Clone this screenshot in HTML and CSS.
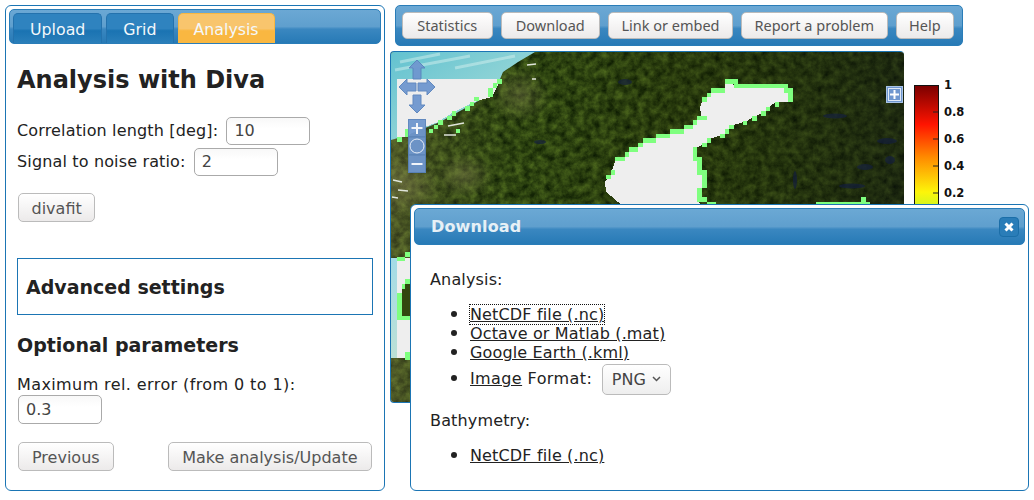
FILE: index.html
```html
<!DOCTYPE html>
<html lang="en">
<head>
    <meta charset="UTF-8">
    <title>Analysis with Diva</title>
    <link rel="stylesheet" href="styles.css">
</head>
<body>
    <!-- left panel -->
    <div class="panel">
        <div class="tabs gloss">
            <a class="tab">Upload</a>
            <a class="tab">Grid</a>
            <a class="tab tab-active">Analysis</a>
        </div>
        <div class="panel-body">
            <h1>Analysis with Diva</h1>
            <div class="field">Correlation length [deg]: <input type="text" value="10"></div>
            <div class="field">Signal to noise ratio: <input type="text" value="2"></div>
            <button class="btn btn-diva">divafit</button>
            <div class="advanced"><h3>Advanced settings</h3></div>
            <h3 class="optional">Optional parameters</h3>
            <div class="max-label">Maximum rel. error (from 0 to 1):</div>
            <input type="text" value="0.3">
            <div class="actions">
                <button class="btn">Previous</button>
                <button class="btn btn-make">Make analysis/Update</button>
            </div>
        </div>
    </div>

    <!-- right side -->
    <div class="main">
        <div class="toolbar gloss">
            <button class="btn btn-wide">Statistics</button>
            <button class="btn btn-wide">Download</button>
            <button class="btn">Link or embed</button>
            <button class="btn">Report a problem</button>
            <button class="btn">Help</button>
        </div>
        <div class="map-row">
            <div class="map">
                <svg class="map-svg" width="513" height="351" viewBox="391 52 513 351">
                    <defs>
                        <filter id="land" x="0" y="0" width="100%" height="100%" color-interpolation-filters="sRGB">
                            <feTurbulence type="fractalNoise" baseFrequency="0.13" numOctaves="5" seed="8"/>
                            <feColorMatrix values="0.42 0 0 0 -0.04  0.5 0 0 0 0  0.18 0 0 0 -0.03  0 0 0 0 1"/>
                        </filter>
                        <linearGradient id="shade" x1="0" y1="0" x2="1" y2="0">
                            <stop offset="0" stop-color="#8a8250" stop-opacity=".35"/>
                            <stop offset=".25" stop-color="#3a5a16" stop-opacity=".15"/>
                            <stop offset=".55" stop-color="#232f08" stop-opacity=".3"/>
                            <stop offset="1" stop-color="#141a10" stop-opacity=".6"/>
                        </linearGradient>
                        <radialGradient id="ridge">
                            <stop offset="0" stop-color="#a89c6c" stop-opacity=".3"/>
                            <stop offset="1" stop-color="#a89c6c" stop-opacity="0"/>
                        </radialGradient>
                        <linearGradient id="water" x1="0" y1="0" x2="1" y2="1">
                            <stop offset="0" stop-color="#63c2d0"/>
                            <stop offset="1" stop-color="#b4e2db"/>
                        </linearGradient>
                        <linearGradient id="strip" x1="0" y1="0" x2="0" y2="1">
                            <stop offset="0" stop-color="#a4dbe6"/>
                            <stop offset="1" stop-color="#bce0d6"/>
                        </linearGradient>
                    </defs>

                    <rect x="391" y="52" width="513" height="351" filter="url(#land)"/>
                    <rect x="391" y="52" width="513" height="351" fill="url(#shade)"/>
                    <ellipse cx="405" cy="185" rx="35" ry="30" fill="url(#ridge)"/>
                    <ellipse cx="520" cy="95" rx="30" ry="28" fill="url(#ridge)"/>
                    <ellipse cx="465" cy="175" rx="28" ry="22" fill="url(#ridge)"/>

                    <!-- lakes -->
                    <g fill="#141f3c" opacity=".7">
                        <ellipse cx="835" cy="116" rx="12" ry="2.500"/>
                        <ellipse cx="887" cy="141" rx="10" ry="3"/>
                        <ellipse cx="795" cy="180" rx="2" ry="9"/>
                        <ellipse cx="865" cy="167" rx="8" ry="3"/>
                        <ellipse cx="852" cy="186" rx="13" ry="2.500"/>
                        <ellipse cx="890" cy="160" rx="5" ry="4"/>
                        <ellipse cx="540" cy="142" rx="6" ry="2"/>
                        <ellipse cx="625" cy="82" rx="7" ry="3"/>
                    </g>

                    <!-- sea at the top left -->
                    <polygon points="391,52 535,52 518,62 503,72 498,84 480,100 440,122 405,136 391,140" fill="url(#water)"/>
                    <path d="M395 70 L470 56 M400 62 L440 54 M455 68 L515 56" stroke="#d3f0ee" stroke-width="3" opacity=".5" fill="none"/>
                    <rect x="391" y="258" width="6" height="100" fill="url(#strip)"/>

                    <!-- coast specks -->
                    <path d="M527 65 l9 -1 M532 79 l4 0 M448 126 l16 -3 M444 135 l12 0 M393 180 l9 2 M398 190 l10 1 M392 197 l6 1" stroke="#dfe4da" stroke-width="1.500" fill="none"/>

                    <!-- grid cells of the analysis -->
                    <g shape-rendering="crispEdges">
                        <polygon fill="#eeeeee" points="397,79 500,79 497,87 492,97 480,100 466,106 452,113 438,122 425,127 412,133 407,137 397,138"/>
                        <path fill="#7fff7f" d="M497 79h5v5h-5z M493 83h4v5h-4z M488 88h5v9h-5z M474 97h5v4h-5z M470 102h4v4h-4z M465 106h5v5h-5z M452 111h4v5h-4z M447 116h5v4h-5z M438 120h5v5h-5z M434 125h4v4h-4z M429 129h4v4h-4z M456 129h4v4h-4z M397 137h5v5h-5z M405 129h3v8h-3z"/>

                        <g transform="translate(590 75) scale(.3333)">
                            <polygon fill="#eeeeee" points="45,320 62,300 75,258 105,245 117,232 143,217 160,203 198,190 240,177 282,163 310,150 322,135 335,125 330,100 335,81 350,67 363,53 405,40 405,27 595,40 595,82 555,82 540,95 528,108 500,122 472,137 432,150 418,163 405,177 363,190 350,203 322,217 322,258 336,300 336,340 322,380 350,400 110,400 80,378 48,350"/>
                            <path fill="#7fff7f" d="M48 300h14v12h-14z M62 285h13v15h-13z M75 245h30v13h-30z M105 232h12v13h-12z M117 217h26v15h-26z M143 203h17v14h-17z M160 190h38v13h-38z M198 177h42v13h-42z M240 163h42v14h-42z M282 150h28v13h-28z M310 135h12v15h-12z M322 123h28v12h-28z M335 67h15v14h-15z M350 53h13v14h-13z M363 40h42v13h-42z M405 13h38v14h-38z M432 27h163v13h-163z M582 40h27v13h-27z M595 53h14v29h-14z M555 82h13v13h-13z M528 95h12v13h-12z M513 108h15v14h-15z M486 122h14v15h-14z M460 137h12v13h-12z M418 150h14v13h-14z M405 163h13v14h-13z M390 177h15v13h-15z M350 190h13v13h-13z M336 203h14v14h-14z M310 217h12v41h-12z M322 245h14v55h-14z M336 285h14v55h-14z M322 340h14v40h-14z M336 367h14v13h-14z M350 380h28v8h-28z"/>
                        </g>

                        <rect x="397" y="258" width="13" height="100" fill="#eeeeee"/>
                        <rect x="402" y="284" width="8" height="32" fill="#32470f"/>
                        <path fill="#7fff7f" d="M397 257h8v4h-8z M405 252h5v5h-5z M405 279h5v5h-5z M402 284h3v5h-3z M397 293h5v27h-5z M402 316h8v4h-8z M405 352h5v8h-5z"/>
                        <path fill="#7fff7f" d="M816 202h54v2h-54z M861 197h5v5h-5z"/>
                    </g>
                </svg>

                <!-- map controls -->
                <svg class="map-controls" width="513" height="351" viewBox="391 52 513 351">
                    <g fill="#6f97cf" stroke="#5a84bd" stroke-width="1" opacity=".95">
                        <path d="M417 60 L425 68 L421 68 L421 79 L413 79 L413 68 L409 68 Z"/>
                        <path d="M417 113 L425 105 L421 105 L421 95 L413 95 L413 105 L409 105 Z"/>
                        <path d="M399 87 L407 79 L407 83 L416 83 L416 91 L407 91 L407 95 Z"/>
                        <path d="M435 87 L427 79 L427 83 L418 83 L418 91 L427 91 L427 95 Z"/>
                        <rect x="408.5" y="119.5" width="17" height="17.500"/>
                        <rect x="408.5" y="137" width="17" height="18"/>
                        <rect x="408.5" y="155" width="17" height="17.500"/>
                    </g>
                    <path d="M417 123v11 M411.500 128h11 M411.500 164h11" stroke="#f2f5fa" stroke-width="2" fill="none"/>
                    <circle cx="417" cy="146" r="7" fill="none" stroke="#e6edf7" stroke-width="1"/>
                    <rect x="886.500" y="86.500" width="16" height="16" fill="#6f97cf" stroke="#a9c3e6"/>
                    <rect x="888.500" y="88.500" width="12" height="12" fill="none" stroke="#dfe8f5"/>
                    <path d="M894.500 90v9 M890 94.500h9" stroke="#ffffff" stroke-width="2"/>
                </svg>
            </div>
            <div class="scale">
                <svg class="scale-bar" width="25" height="119" viewBox="0 0 25 119">
                    <defs>
                        <linearGradient id="jet" x1="0" y1="0" x2="0" y2="1">
                            <stop offset="0" stop-color="#7a0000"/>
                            <stop offset=".3" stop-color="#ff1400"/>
                            <stop offset=".55" stop-color="#ff8a00"/>
                            <stop offset=".82" stop-color="#fdf50a"/>
                            <stop offset="1" stop-color="#b4f730"/>
                        </linearGradient>
                    </defs>
                    <rect x="0.500" y="0.500" width="24" height="130" fill="url(#jet)" stroke="#111"/>
                    <path d="M19 27h5 M19 54h5 M19 81h5 M19 108h5" stroke="#222"/>
                </svg>
                <div class="scale-labels">
                    <span>1</span><span>0.8</span><span>0.6</span><span>0.4</span><span>0.2</span>
                </div>
            </div>
        </div>
    </div>

    <!-- download dialog -->
    <div class="dialog">
        <div class="dialog-title gloss">
            <span>Download</span>
            <a class="dialog-close">
                <svg width="12" height="12" viewBox="0 0 12 12"><path d="M2.500 2.500L9.500 9.500M9.500 2.500L2.500 9.500" stroke="#fff" stroke-width="3"/></svg>
            </a>
        </div>
        <div class="dialog-body">
            <p>Analysis:</p>
            <ul>
                <li><a class="focused">NetCDF file (.nc)</a></li>
                <li><a>Octave or Matlab (.mat)</a></li>
                <li><a>Google Earth (.kml)</a></li>
                <li class="format-row"><a>Image</a> Format: <span class="select">PNG<svg width="9" height="6" viewBox="0 0 9 6"><path d="M1 1L4.500 4.500L8 1" fill="none" stroke="#555" stroke-width="1.500"/></svg></span></li>
            </ul>
            <p>Bathymetry:</p>
            <ul>
                <li><a>NetCDF file (.nc)</a></li>
            </ul>
        </div>
    </div>
</body>
</html>
```

FILE: styles.css
```css
* { margin: 0; padding: 0; box-sizing: border-box; }
body { display: flex; gap: 5px; padding: 5px; height: 500px; overflow: hidden; background: #fff; font-family: "DejaVu Sans", sans-serif; font-size: 16px; letter-spacing: .15px; color: #222; }

.gloss { background: linear-gradient(#6ba8d4, #5f9fce 50%, #3a87c0 58%, #277ab6); border-radius: 5px; }
.btn { height: 29px; padding: 1px 13px 0; font-family: "DejaVu Sans", sans-serif; font-size: 16px; color: #555; white-space: nowrap; background: linear-gradient(#fff, #eceaea); border: 1px solid #bbb; border-radius: 5px; }

/* left panel */
.panel { width: 380px; height: 486px; padding: 3px; border: 1.500px solid #1b75b4; border-radius: 6px; }
.tabs { display: flex; align-items: flex-end; gap: 4px; height: 35px; padding-left: 3px; border: 1px solid #2a7db8; }
.tab { height: 30px; padding: 6px 16px 0; font-size: 15.800px; letter-spacing: 0; color: #f4f8fb; background: linear-gradient(#2f83bf, #2f83bf 50%, #1a73b2 58%, #2a7fba); border: 1px solid #2472ad; border-bottom: 0; border-radius: 5px 5px 0 0; }
.tab-active { background: linear-gradient(#f8c56d, #f8c56d 50%, #f9b741 58%, #f9b741); border-color: #f9b741; padding: 6px 15px 0; }
.panel-body { padding: 20px 8px 0; }
h1 { font-size: 24px; line-height: 32px; margin-bottom: 19px; color: #222; letter-spacing: 0; }
h3 { font-size: 19px; line-height: 24px; color: #222; letter-spacing: 0; }
.field { height: 31px; display: flex; align-items: center; gap: 3px; white-space: pre; }
input { width: 84px; height: 28px; padding: 0 7px; font-family: "DejaVu Sans", sans-serif; font-size: 16px; color: #444; background: linear-gradient(#f8f8f8, #fff 40%); border: 1px solid #aaa; border-radius: 5px; }
.btn-diva { display: block; margin: 16px 0 0 1px; padding: 1px 12.500px 0; }
.advanced { display: flex; align-items: center; height: 57px; margin-top: 36px; padding-left: 8px; border: 1px solid #1b75b4; }
.optional { margin-top: 18px; }
.max-label { margin-top: 18px; line-height: 20px; letter-spacing: .4px; }
.panel-body > input { display: block; margin: 0 0 0 1px; height: 29px; }
.actions { display: flex; justify-content: space-between; margin: 18px 1px 0; }
.btn-make { padding: 1px 13.500px 0; }

/* toolbar, map and colour scale */
.main { display: flex; flex-direction: column; gap: 5px; }
.toolbar { display: flex; gap: 8px; width: 568px; height: 41px; margin-left: 5px; padding: 6px; border: 1px solid #2a7db8; }
.toolbar .btn { flex: none; height: 27px; font-family: "Noto Sans", sans-serif; font-size: 14.500px; letter-spacing: 0; padding: 0 12.500px 2px; }
.toolbar .btn-wide { padding-left: 14.200px; padding-right: 14.200px; }
.map-row { display: flex; gap: 10px; }
.map { position: relative; width: 514px; height: 352px; overflow: hidden; border: 1px solid #1b75b4; border-right: 0; border-radius: 4px 4px 0 4px; }
.map-svg { display: block; }
.map-controls { position: absolute; left: 0; top: 0; }
.scale { display: flex; gap: 5px; align-items: flex-start; margin-top: 34px; }
.scale-bar { display: block; }
.scale-labels { display: flex; flex-direction: column; margin-top: -13px; font-size: 11.500px; font-weight: bold; letter-spacing: 0; color: #111; }
.scale-labels span { line-height: 27px; }

/* dialog */
.dialog { position: absolute; left: 410px; top: 204px; width: 619px; height: 287px; padding: 3px; background: #fff; border: 1.500px solid #1b75b4; border-radius: 6px; }
.dialog-title { display: flex; align-items: center; justify-content: space-between; height: 37px; padding: 0 5px 0 16px; font-size: 16px; font-weight: bold; color: #e6f0f6; border: 1px solid #2a7db8; }
.dialog-close { display: flex; align-items: center; justify-content: center; width: 20px; height: 20px; background: #2a7db8; border: 1px solid #1b6ea8; border-radius: 4px; }
.dialog-body { padding: 25px 16px 0; }
.dialog-body p { line-height: 20px; margin-bottom: 14px; }
ul { margin-bottom: 17px; padding-left: 40px; }
li { height: 19px; line-height: 19px; }
li::marker { font-size: 19px; }
a { text-decoration: underline; }
.tab, .dialog-close { text-decoration: none; }
.focused { outline: 1px dotted #111; }
.format-row { height: 33px; line-height: 33px; white-space: pre; letter-spacing: .4px; }
.select { display: inline-flex; align-items: center; justify-content: space-between; width: 69px; height: 31px; margin: -1px 0 0 4px; padding: 0 9px; color: #444; line-height: 29px; letter-spacing: .15px; vertical-align: middle; background: linear-gradient(#fff, #eee); border: 1px solid #bbb; border-radius: 5px; }
```
